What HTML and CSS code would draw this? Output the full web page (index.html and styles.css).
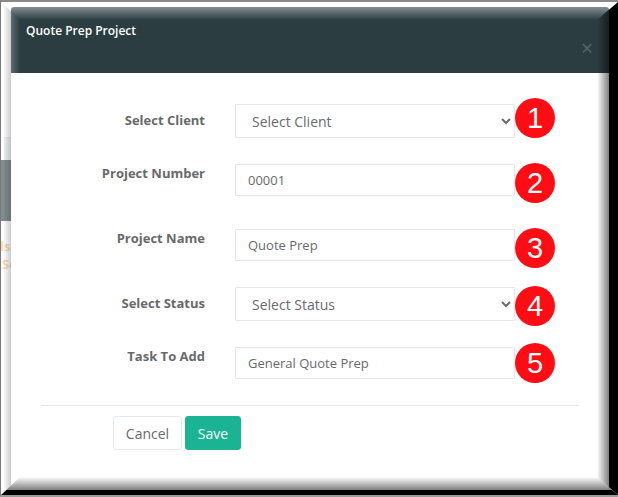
FILE: index.html
```html
<!DOCTYPE html>
<html lang="en">
<head>
<meta charset="utf-8">
<title>Quote Prep Project</title>
<link rel="stylesheet" href="styles.css">
</head>
<body>
<div class="frame">
  <div class="backdrop">
    <div class="backdrop-pale"></div>
    <div class="backdrop-band"></div>
    <div class="backdrop-text">
      <div class="backdrop-line-one">ls</div>
      <div class="backdrop-line-two">Sc</div>
    </div>
  </div>
  <div class="modal">
    <header class="modal-header">
      <h4 class="modal-title">Quote Prep Project</h4>
      <span class="modal-close">×</span>
    </header>
    <form class="modal-form">
      <div class="row row-select">
        <label class="row-label">Select Client</label>
        <div class="select-wrap">
          <select class="field field-select"><option>Select Client</option></select>
          <svg class="chevron" width="10" height="7" viewBox="0 0 10 7"><path d="M1 1l4 4 4-4" fill="none" stroke="#6a6a6a" stroke-width="2"/></svg>
        </div>
        <span class="badge badge-one">1</span>
      </div>
      <div class="row row-wide">
        <label class="row-label">Project Number</label>
        <input class="field field-input" value="00001">
        <span class="badge badge-two">2</span>
      </div>
      <div class="row">
        <label class="row-label">Project Name</label>
        <input class="field field-input" value="Quote Prep">
        <span class="badge badge-three">3</span>
      </div>
      <div class="row row-select">
        <label class="row-label">Select Status</label>
        <div class="select-wrap">
          <select class="field field-select"><option>Select Status</option></select>
          <svg class="chevron" width="10" height="7" viewBox="0 0 10 7"><path d="M1 1l4 4 4-4" fill="none" stroke="#6a6a6a" stroke-width="2"/></svg>
        </div>
        <span class="badge badge-four">4</span>
      </div>
      <div class="row">
        <label class="row-label">Task To Add</label>
        <input class="field field-input" value="General Quote Prep">
        <span class="badge badge-five">5</span>
      </div>
      <footer class="modal-footer">
        <button type="button" class="btn btn-cancel">Cancel</button>
        <button type="button" class="btn btn-save">Save</button>
      </footer>
    </form>
  </div>
  <div class="bevel bevel-top"></div>
  <div class="bevel bevel-left"></div>
  <div class="bevel bevel-right"></div>
  <div class="bevel bevel-bottom"></div>
</div>
</body>
</html>
```
FILE: styles.css
```css
* { box-sizing: border-box; }
html, body { margin: 0; padding: 0; }
body {
  width: 618px;
  height: 497px;
  overflow: hidden;
  background: #fff;
  font-family: "Open Sans", "Liberation Sans", sans-serif;
  color: #676a6c;
}
.frame {
  position: relative;
  width: 618px;
  height: 497px;
  overflow: hidden;
  background: #fff;
  border-top: 2px solid #8a8a8a;
  border-left: 1px solid #7a7a7a;
  border-bottom: 2px solid #9a9a9a;
  padding: 5px 0 0 10px;
}
.backdrop {
  position: absolute;
  left: 0;
  top: 0;
  width: 10px;
  height: 100%;
  overflow: hidden;
}
.backdrop-pale {
  position: absolute;
  left: 3px;
  right: 0;
  top: 135px;
  height: 23px;
  background: #eff3f3;
  border-top: 1px solid #e4e8e8;
}
.backdrop-band {
  position: absolute;
  left: 0;
  right: 0;
  top: 158px;
  height: 61px;
  background: #828d8f;
}
.backdrop-text {
  position: absolute;
  left: 0;
  top: 235px;
  font-size: 13px;
  font-weight: 700;
  line-height: 18px;
  color: #fad9b8;
  white-space: nowrap;
}
.backdrop-line-one { margin-left: -1px; }
.backdrop-line-two { margin-left: 1px; }
.modal {
  position: relative;
  width: 598px;
  height: 483px;
  background: #fff;
  border-radius: 3px 3px 0 0;
}
.modal-header {
  position: relative;
  height: 66px;
  background: #2b3d41;
  color: #fff;
  padding: 16px 15px 0;
  border-radius: 3px 3px 0 0;
}
.modal-title {
  margin: 0;
  font-size: 12px;
  font-weight: 600;
  line-height: 16px;
}
.modal-close {
  position: absolute;
  right: 16px;
  top: 29px;
  font-size: 21px;
  font-weight: 400;
  line-height: 24px;
  color: #566669;
}
.modal-form { padding-top: 31px; }
.row {
  position: relative;
  display: flex;
  align-items: flex-start;
  gap: 30px;
  margin-bottom: 26px;
}
.row-wide { margin-bottom: 33px; }
.row-label {
  width: 194px;
  text-align: right;
  font-size: 13px;
  font-weight: 700;
  line-height: 18px;
  color: #676a6c;
}
.row-select .row-label { padding-top: 7px; }
.field {
  display: block;
  width: 280px;
  background: #fff;
  border: 1px solid #e5e6e7;
  border-radius: 1px;
  font-family: inherit;
  color: #676a6c;
  outline: none;
}
.field-input {
  height: 32px;
  padding: 0 12px;
  font-size: 13px;
}
.select-wrap {
  position: relative;
  width: 280px;
}
.field-select {
  height: 34px;
  padding: 0 16px;
  font-size: 14px;
  appearance: none;
  -webkit-appearance: none;
}
.chevron {
  position: absolute;
  right: 4px;
  top: 14px;
}
.badge {
  position: absolute;
  left: 504px;
  width: 40px;
  height: 40px;
  border-radius: 50%;
  background: #fe0e14;
  color: #fff;
  font-family: "Liberation Sans", Arial, sans-serif;
  font-size: 29px;
  line-height: 40px;
  text-align: center;
}
.badge-one { top: -6px; }
.badge-two { top: -1px; }
.badge-three { top: -1px; }
.badge-four { top: -1px; }
.badge-five { top: -4px; }
.modal-footer {
  margin: 0 30px;
  padding: 10px 0 0 72px;
  border-top: 1px solid #e7eaec;
  display: flex;
  gap: 3px;
}
.btn {
  height: 34px;
  border-radius: 3px;
  font-family: inherit;
  font-size: 14px;
  padding: 0;
}
.btn-cancel {
  width: 69px;
  background: #fff;
  border: 1px solid #e7eaec;
  color: #676a6c;
}
.btn-save {
  width: 56px;
  background: #1ab394;
  border: 1px solid #1ab394;
  color: #fff;
}
.bevel {
  position: absolute;
  left: 0;
  top: 0;
  width: 617px;
  height: 493px;
  pointer-events: none;
}
.bevel-top {
  clip-path: polygon(0 0, 617px 0, 596px 18px, 19px 18px);
  background: linear-gradient(180deg, rgba(255,255,255,0) 5px, rgba(255,255,255,.42) 5px, rgba(255,255,255,0) 18px);
}
.bevel-left {
  clip-path: polygon(0 0, 19px 18px, 19px 475px, 0 493px);
  background: linear-gradient(90deg, rgba(0,0,0,0) 2px, rgba(0,0,0,.2) 10px, rgba(255,255,255,.25) 10px, rgba(255,255,255,0) 19px);
}
.bevel-right {
  clip-path: polygon(617px 0, 617px 493px, 596px 475px, 596px 18px);
  background: linear-gradient(90deg, rgba(0,0,0,0) 596px, rgba(0,0,0,.5) 608px, #000 608px);
}
.bevel-bottom {
  clip-path: polygon(0 493px, 19px 475px, 596px 475px, 617px 493px);
  background: linear-gradient(180deg, rgba(0,0,0,0) 475px, rgba(0,0,0,.5) 488px, #000 488px);
}
```
